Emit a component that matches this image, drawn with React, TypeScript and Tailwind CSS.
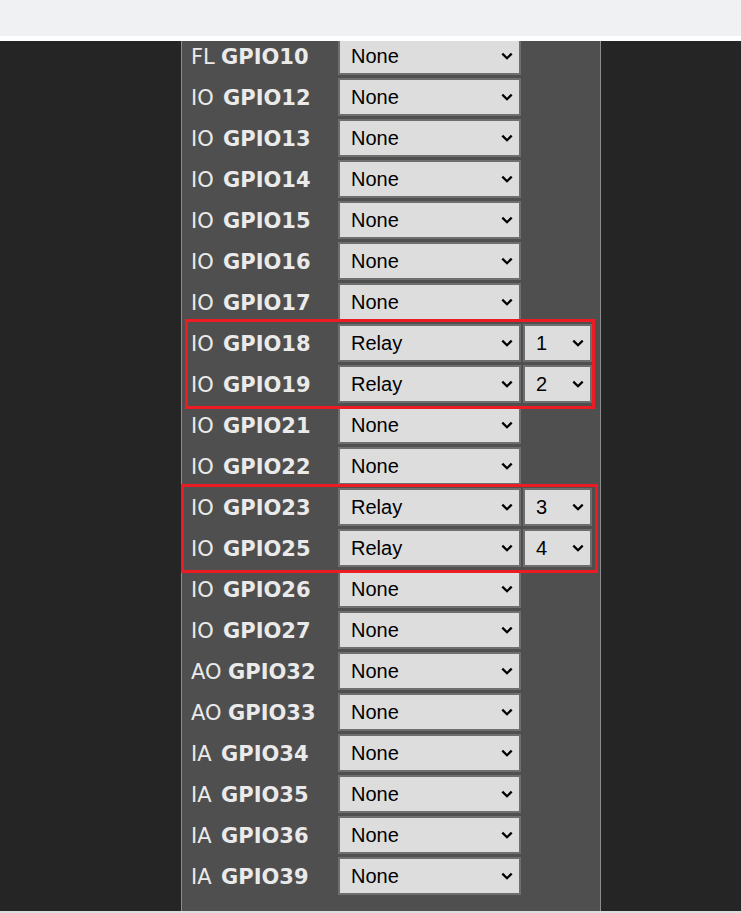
import React from "react";

type Row = { p: string; g: string; v: string; n?: string };

const rows: Row[] = [
  { p: "FL", g: "GPIO10", v: "None" },
  { p: "IO", g: "GPIO12", v: "None" },
  { p: "IO", g: "GPIO13", v: "None" },
  { p: "IO", g: "GPIO14", v: "None" },
  { p: "IO", g: "GPIO15", v: "None" },
  { p: "IO", g: "GPIO16", v: "None" },
  { p: "IO", g: "GPIO17", v: "None" },
  { p: "IO", g: "GPIO18", v: "Relay", n: "1" },
  { p: "IO", g: "GPIO19", v: "Relay", n: "2" },
  { p: "IO", g: "GPIO21", v: "None" },
  { p: "IO", g: "GPIO22", v: "None" },
  { p: "IO", g: "GPIO23", v: "Relay", n: "3" },
  { p: "IO", g: "GPIO25", v: "Relay", n: "4" },
  { p: "IO", g: "GPIO26", v: "None" },
  { p: "IO", g: "GPIO27", v: "None" },
  { p: "AO", g: "GPIO32", v: "None" },
  { p: "AO", g: "GPIO33", v: "None" },
  { p: "IA", g: "GPIO34", v: "None" },
  { p: "IA", g: "GPIO35", v: "None" },
  { p: "IA", g: "GPIO36", v: "None" },
  { p: "IA", g: "GPIO39", v: "None" },
];

const prefixW: Record<string, string> = {
  FL: "w-[30px]",
  IO: "w-[32px]",
  AO: "w-[37px]",
  IA: "w-[30px]",
};

function Chevron() {
  return (
    <svg width="12" height="8" viewBox="0 0 12 8" className="shrink-0">
      <path d="M1.3 1.6 L6 6.2 L10.7 1.6" fill="none" stroke="#000" strokeWidth="2.3" />
    </svg>
  );
}

function Sel({ text, w }: { text: string; w: string }) {
  return (
    <div
      className={`${w} h-[38px] shrink-0 bg-[#dddddd] border-2 border-[#6e6e6e] flex items-center justify-between pl-[11px] pr-[6px] text-[20px] text-black`}
      style={{ fontFamily: '"Liberation Sans", Arial, sans-serif' }}
    >
      <span className="leading-none">{text}</span>
      <Chevron />
    </div>
  );
}

export default function App() {
  return (
    <div className="w-[741px] h-[913px] overflow-hidden flex flex-col bg-[#252525]">
      <div className="h-[36px] shrink-0 bg-[#f0f1f3]" />
      <div className="h-[5px] shrink-0 bg-white" />
      <div className="flex-1 overflow-hidden">
        <div className="relative ml-[181px] w-[420px] -mt-[4px] h-[900px] bg-[#4f4f4f] border-x border-[#8c8c8c]">
          <div className="flex flex-col gap-[3px]">
            {rows.map((r) => (
              <div key={r.g} className="flex items-center h-[38px]">
                <div
                  className="w-[156px] shrink-0 pl-[9px] pt-[3px] text-[21px] text-[#eaeaea] leading-none whitespace-nowrap"
                  style={{ fontFamily: '"DejaVu Sans", Verdana, sans-serif' }}
                >
                  <span className={`inline-block ${prefixW[r.p]}`}>{r.p}</span>
                  <span className="font-bold">{r.g}</span>
                </div>
                <Sel text={r.v} w="w-[183px]" />
                {r.n && (
                  <div className="ml-[2px]">
                    <Sel text={r.n} w="w-[69px]" />
                  </div>
                )}
              </div>
            ))}
          </div>
          <div className="absolute left-[3px] top-[282px] w-[410px] h-[90px] border-[3px] border-[#ed1c24]" />
          <div className="absolute -left-px top-[447px] w-[417px] h-[89px] border-[3px] border-[#ed1c24]" />
        </div>
      </div>
      <div className="h-[2px] shrink-0 bg-[#dcdcdc]" />
    </div>
  );
}
